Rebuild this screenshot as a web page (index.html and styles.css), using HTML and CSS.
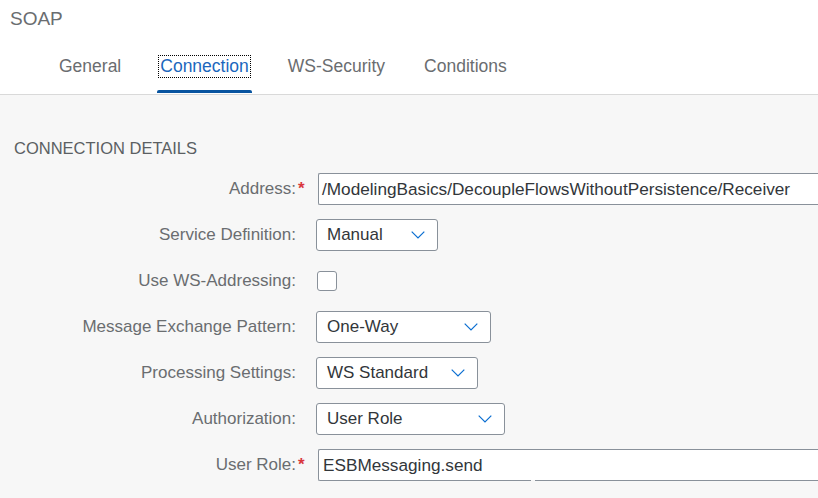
FILE: index.html
```html
<!DOCTYPE html>
<html lang="en">
<head>
<meta charset="utf-8">
<title>SOAP</title>
<link rel="stylesheet" href="styles.css">
</head>
<body>
<header class="header">
  <div class="title">SOAP</div>
  <nav class="tabs">
    <div class="tab"><span class="tab-label">General</span><span class="tab-bar"></span></div>
    <div class="tab tab-active"><span class="tab-label">Connection</span><span class="tab-bar"></span></div>
    <div class="tab"><span class="tab-label">WS-Security</span><span class="tab-bar"></span></div>
    <div class="tab"><span class="tab-label">Conditions</span><span class="tab-bar"></span></div>
  </nav>
</header>
<main class="content">
  <h2 class="section-title">CONNECTION DETAILS</h2>
  <div class="form">
    <div class="label required">Address:</div>
    <div class="control"><div class="input">/ModelingBasics/DecoupleFlowsWithoutPersistence/Receiver</div></div>

    <div class="label">Service Definition:</div>
    <div class="control"><div class="select w-manual"><span class="select-text">Manual</span><svg class="chevron" viewBox="0 0 14 8" width="14" height="8"><polyline points="0.7,0.7 7,7 13.3,0.7"/></svg></div></div>

    <div class="label">Use WS-Addressing:</div>
    <div class="control"><div class="checkbox"></div></div>

    <div class="label">Message Exchange Pattern:</div>
    <div class="control"><div class="select w-oneway"><span class="select-text">One-Way</span><svg class="chevron" viewBox="0 0 14 8" width="14" height="8"><polyline points="0.7,0.7 7,7 13.3,0.7"/></svg></div></div>

    <div class="label">Processing Settings:</div>
    <div class="control"><div class="select w-ws"><span class="select-text">WS Standard</span><svg class="chevron" viewBox="0 0 14 8" width="14" height="8"><polyline points="0.7,0.7 7,7 13.3,0.7"/></svg></div></div>

    <div class="label">Authorization:</div>
    <div class="control"><div class="select w-auth"><span class="select-text">User Role</span><svg class="chevron" viewBox="0 0 14 8" width="14" height="8"><polyline points="0.7,0.7 7,7 13.3,0.7"/></svg></div></div>

    <div class="label required">User Role:</div>
    <div class="control"><div class="input input-role">ESBMessaging.send</div></div>
  </div>
</main>
</body>
</html>
```

FILE: styles.css
```css
* { box-sizing: border-box; }

html, body {
  margin: 0;
  padding: 0;
}

body {
  width: 818px;
  height: 498px;
  overflow: hidden;
  background: #f7f7f7;
  font-family: "Liberation Sans", Arial, sans-serif;
  color: #32363a;
}

.header {
  background: #ffffff;
  height: 95px;
  border-bottom: 1px solid #d9d9d9;
  padding-top: 8px;
}

.title {
  font-size: 19px;
  line-height: 22px;
  color: #6a6d70;
  padding-left: 10px;
}

.tabs {
  display: flex;
  gap: 33px;
  padding-left: 56px;
  margin-top: 26px;
}

.tab {
  display: flex;
  flex-direction: column;
  align-items: stretch;
  padding-bottom: 1px;
}

.tab-label {
  font-size: 17.5px;
  line-height: 21px;
  color: #6a6d70;
  padding: 0 1px;
  margin: 0 2px;
  white-space: nowrap;
}

.tab-bar {
  height: 3px;
  margin-top: 13px;
  border-radius: 2px 2px 0 0;
}

.tab-active .tab-label {
  color: #1b67bd;
  outline: 1px dotted #000000;
}

.tab-active .tab-bar {
  background: #0854a0;
}

.content {
  padding-top: 43px;
}

.section-title {
  margin: 0;
  padding-left: 14px;
  font-size: 16.5px;
  font-weight: normal;
  line-height: 20px;
  color: #5b5f63;
}

.form {
  display: grid;
  grid-template-columns: 296px 1fr;
  grid-auto-rows: 32px;
  column-gap: 20px;
  row-gap: 14px;
  margin-top: 15px;
  align-items: center;
}

.label {
  justify-self: end;
  position: relative;
  font-size: 17px;
  line-height: 20px;
  color: #6a6d70;
  white-space: nowrap;
}

.required::after {
  content: "*";
  position: absolute;
  left: calc(100% + 2px);
  top: 0;
  color: #d9363e;
  font-weight: bold;
}

.control {
  display: flex;
  align-items: center;
  height: 32px;
}

.input {
  position: relative;
  margin-left: 2px;
  width: 540px;
  height: 32px;
  border: 1px solid #89919a;
  border-right: none;
  border-radius: 2px 0 0 2px;
  background: #ffffff;
  padding: 0 3px;
  font-size: 17.2px;
  line-height: 30px;
  color: #32363a;
  white-space: nowrap;
}

.input-role {
  padding-left: 4px;
}

.input-role::after {
  content: "";
  position: absolute;
  left: 212px;
  bottom: -1px;
  width: 4px;
  height: 1px;
  background: #f7f7f7;
}

.select {
  display: flex;
  align-items: center;
  height: 32px;
  border: 1px solid #89919a;
  border-radius: 3px;
  background: #ffffff;
  padding: 0 12px 0 10px;
  font-size: 17px;
  color: #32363a;
}

.select-text {
  flex: 1;
  line-height: 30px;
  white-space: nowrap;
}

.w-manual { width: 122px; }
.w-oneway { width: 175px; }
.w-ws { width: 162px; }
.w-auth { width: 189px; }

.chevron {
  flex: none;
  fill: none;
  stroke: #0a6ed1;
  stroke-width: 1.2;
}

.checkbox {
  margin-left: 1px;
  width: 20px;
  height: 20px;
  border: 1px solid #89919a;
  border-radius: 3px;
  background: #ffffff;
}
```
